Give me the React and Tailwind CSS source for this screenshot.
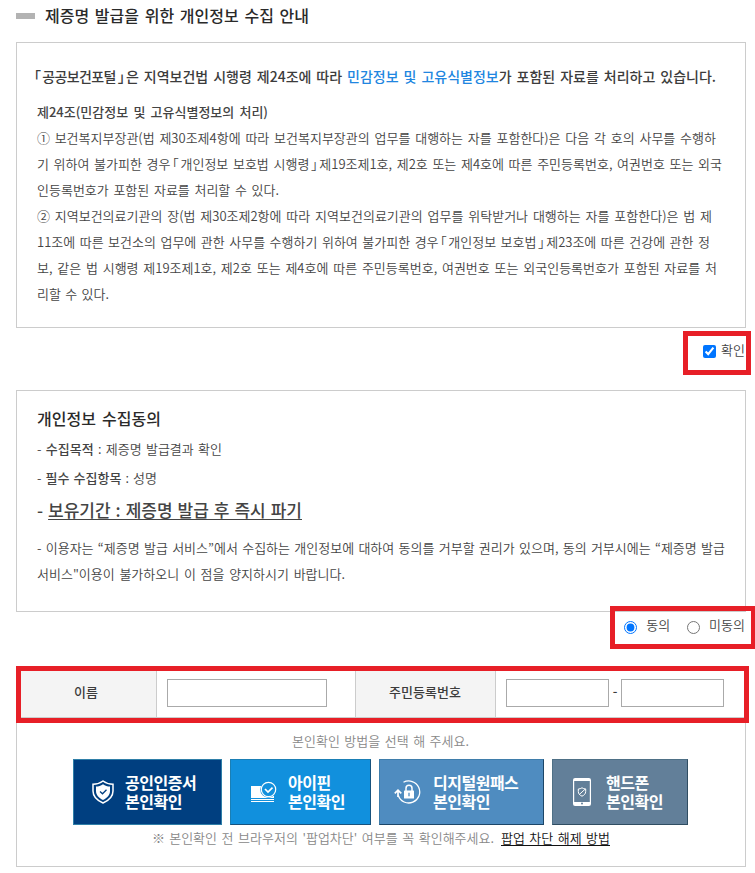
import { useState } from "react";
import clsx from "clsx";

const articles = [
  { mark: "①", text: " 보건복지부장관(법 제30조제4항에 따라 보건복지부장관의 업무를 대행하는 자를 포함한다)은 다음 각 호의 사무를 수행하", width: "w-[679px]" },
  { text: "기 위하여 불가피한 경우「개인정보 보호법 시행령」제19조제1호, 제2호 또는 제4호에 따른 주민등록번호, 여권번호 또는 외국", width: "w-[685px]" },
  { text: "인등록번호가 포함된 자료를 처리할 수 있다.", width: "w-[242px]" },
  { mark: "②", text: " 지역보건의료기관의 장(법 제30조제2항에 따라 지역보건의료기관의 업무를 위탁받거나 대행하는 자를 포함한다)은 법 제", width: "w-[675px]" },
  { text: "11조에 따른 보건소의 업무에 관한 사무를 수행하기 위하여 불가피한 경우「개인정보 보호법」제23조에 따른 건강에 관한 정", width: "w-[673px]" },
  { text: "보, 같은 법 시행령 제19조제1호, 제2호 또는 제4호에 따른 주민등록번호, 여권번호 또는 외국인등록번호가 포함된 자료를 처", width: "w-[680px]" },
  { text: "리할 수 있다.", width: "w-[72px]" },
];

const methods = [
  { name: "공인인증서", icon: ShieldIcon, box: "w-[149px] pl-[18px] gap-[11px] bg-[#003f80] border-[#2f7fa8]" },
  { name: "아이핀", icon: CardIcon, box: "w-[141px] pl-[20px] gap-[11px] bg-[#1190dd] border-t-[#1a7fb5] border-l-[#1a7fb5] border-r-[#17527d] border-b-[#17527d]" },
  { name: "디지털원패스", icon: LockIcon, box: "w-[165px] pl-[14px] gap-[12px] bg-[#4f8cc0] border-t-[#3f7dab] border-l-[#3f7dab] border-r-[#1c4668] border-b-[#1c4668]" },
  { name: "핸드폰", icon: PhoneIcon, box: "w-[136px] pl-[20px] gap-[15px] bg-[#627f99] border-t-[#4e7086] border-l-[#4e7086] border-r-[#304d62] border-b-[#304d62]" },
];

function Line({ className, children }) {
  return <p className={clsx("whitespace-nowrap [text-align-last:justify]", className)}>{children}</p>;
}

function ShieldIcon() {
  return (
    <svg width="22" height="24" viewBox="0 0 22 24" fill="none">
      <path d="M11 1C8 3.3 4.8 4.2 1 4.3V11c0 5.7 4.2 9.5 10 12 5.800-2.500 10-6.300 10-12V4.300C17.200 4.200 14 3.300 11 1Z" stroke="white" strokeWidth="1.500" />
      <path d="M11 4.200C8.800 5.700 6.600 6.400 4 6.600V11c0 4.100 2.800 7 7 9 4.200-2 7-4.900 7-9V6.600c-2.600-.2-4.800-.9-7-2.400Z" fill="white" />
      <path d="m8 11.500 2.500 2.300 4-4" stroke="#003f80" strokeWidth="1.300" />
    </svg>
  );
}

function CardIcon() {
  return (
    <svg width="26" height="22" viewBox="0 0 26 22" fill="none">
      <rect y="5" width="23" height="12" fill="white" />
      <rect y="18" width="23" height="1" fill="white" />
      <rect y="20" width="23" height="1" fill="white" />
      <circle cx="17.500" cy="8.500" r="8.300" fill="#1190dd" />
      <circle cx="17.500" cy="8.500" r="7.200" stroke="white" strokeWidth="1.200" />
      <path d="m14 8 3 3 4.500-4.300" stroke="white" strokeWidth="1.700" />
    </svg>
  );
}

function LockIcon() {
  return (
    <svg width="27" height="24" viewBox="0 0 27 24" fill="none">
      <path d="M9.500 2.300A11 11 0 1 1 4.300 15.500" stroke="white" strokeWidth="1.300" />
      <path d="M4 17v-6M.8 13.300 4 10.200l3.300 3.100" stroke="white" strokeWidth="1.700" />
      <rect x="10" y="10.500" width="10" height="8" rx=".5" fill="white" />
      <path d="M12 11V8.300a3 3 0 0 1 6 0V11" stroke="white" strokeWidth="1.500" />
      <path d="M15 12.800v3.500" stroke="#4f8cc0" strokeWidth="1.300" />
    </svg>
  );
}

function PhoneIcon() {
  return (
    <svg width="18" height="28" viewBox="0 0 18 28" fill="none">
      <rect x=".6" y=".6" width="16.800" height="26.800" rx="1.500" stroke="white" strokeWidth="1.200" />
      <path d="M1 1h16v2H1zM1 24h16v3H1z" fill="white" />
      <circle cx="9" cy="25.500" r="1" fill="#627f99" />
      <path d="M9 9.800c-1.200.8-2.300 1.100-3.700 1.200v2.500c0 2.300 1.500 3.700 3.700 4.700 2.200-1 3.700-2.400 3.700-4.700V11c-1.400-.1-2.500-.4-3.700-1.200ZM6.300 16.500l6-5.500" stroke="white" strokeWidth="1" />
    </svg>
  );
}

function Highlight({ className }) {
  return <div className={clsx("pointer-events-none absolute border-[5px] border-[#e71f27]", className)} />;
}

export default function App() {
  const [confirmed, setConfirmed] = useState(true);
  const [agree, setAgree] = useState("yes");

  return (
    <div className="h-[873px] w-[755px] overflow-hidden bg-white pl-4 font-['Noto_Sans_CJK_KR',sans-serif] text-[13px] font-[350] leading-[26px] text-[#444] [font-feature-settings:'halt']">
      <div className="flex h-[42px] items-start gap-[10px] pt-[2px]">
        <span className="mt-[11px] h-[6px] w-[19px] bg-[#b3b3b3]" />
        <h1 className="w-[264px] whitespace-nowrap text-[16px] font-medium text-[#2a2a2a] [text-align-last:justify]">제증명 발급을 위한 개인정보 수집 안내</h1>
      </div>

      <section className="h-[286px] w-[730px] border border-[#ccc] pl-[20px] pt-[20px]">
        <Line className="-ml-[3px] w-[682px] text-[14px] font-medium text-[#3c3c3c]">
          <span className="tracking-[-0.6px]">「공공보건포털」</span>은 지역보건법 시행령 제24조에 따라 <span className="text-[#2186e0]">민감정보 및 고유식별정보</span>가 포함된 자료를 처리하고 있습니다.
        </Line>
        <Line className="mt-[10px] w-[231px] font-medium">제24조(민감정보 및 고유식별정보의 처리)</Line>
        {articles.map((a) => (
          <Line key={a.text} className={a.width}>
            {a.mark && <span className="tracking-[-2px]">{a.mark}</span>}{a.text}
          </Line>
        ))}
      </section>

      <div className="relative flex h-[62px] w-[730px] justify-end pr-px pt-[9px]">
        <label className="flex gap-[5px]">
          <input type="checkbox" className="mt-[8px] size-[13px]" checked={confirmed} onChange={(e) => setConfirmed(e.target.checked)} />
          확인
        </label>
        <Highlight className="left-[667px] top-[3px] h-[44px] w-[68px]" />
      </div>

      <section className="h-[222px] w-[730px] border border-[#ccc] pl-[20px] pt-[14px]">
        <Line className="w-[124px] text-[16px] font-medium text-[#2a2a2a]">개인정보 수집동의</Line>
        <Line className="mt-[5px] w-[185px]">- <b className="font-medium">수집목적</b> : 제증명 발급결과 확인</Line>
        <Line className="mt-[3px] w-[120px]">- <b className="font-medium">필수 수집항목</b> : 성명</Line>
        <Line className="mt-[6px] w-[265px] text-[17px] font-medium">- <u className="underline-offset-2">보유기간 : 제증명 발급 후 즉시 파기</u></Line>
        <Line className="mt-[12px] w-[688px]">- 이용자는 “제증명 발급 서비스”에서 수집하는 개인정보에 대하여 동의를 거부할 권리가 있으며, 동의 거부시에는 “제증명 발급</Line>
        <Line className="w-[308px]">서비스"이용이 불가하오니 이 점을 양지하시기 바랍니다.</Line>
      </section>

      <div className="relative flex h-[59px] w-[730px] justify-end gap-[17px] pr-px">
        <label className="flex gap-[9px]">
          <input type="radio" name="agree" className="mt-[9px] size-[13px]" checked={agree === "yes"} onChange={() => setAgree("yes")} />
          동의
        </label>
        <label className="flex gap-[9px]">
          <input type="radio" name="agree" className="mt-[9px] size-[13px]" checked={agree === "no"} onChange={() => setAgree("no")} />
          미동의
        </label>
        <Highlight className="-top-[6px] left-[594px] h-[43px] w-[146px]" />
      </div>

      <section className="relative h-[196px] w-[730px] border border-t-0 border-[#ccc]">
        <div className="flex h-[47px] border-b border-[#ccc] font-medium text-[#3c3c3c]">
          <div className="flex w-[140px] items-center justify-center border-r border-[#ccc] bg-[#f4f4f4] pb-[5px] pr-px">이름</div>
          <div className="flex w-[199px] border-r border-[#ccc] pl-[10px] pt-[8px]">
            <input className="h-[28px] w-[160px] border border-[#aaa]" />
          </div>
          <div className="flex w-[140px] items-center justify-center border-r border-[#ccc] bg-[#f4f4f4] pb-[5px] pr-px">주민등록번호</div>
          <div className="flex pl-[10px] pt-[8px]">
            <input className="h-[28px] w-[103px] border border-[#aaa]" />
            <span className="w-[12px] text-center leading-[24px]">-</span>
            <input className="h-[28px] w-[103px] border border-[#aaa]" />
          </div>
        </div>
        <Highlight className="-left-px -top-[5px] h-[57px] w-[733px]" />

        <div className="flex flex-col pt-[10px] text-[#888]">
          <Line className="ml-[275px] w-[177px]">본인확인 방법을 선택 해 주세요.</Line>
          <div className="ml-[56px] mt-[5px] flex gap-[8px]">
            {methods.map(({ name, icon: Icon, box }) => (
              <button key={name} className={clsx("flex h-[66px] items-center border text-left text-[16px] font-bold leading-[19px] tracking-[-0.5px] text-white", box)}>
                <Icon />
                <span className="whitespace-nowrap">{name}<br />본인확인</span>
              </button>
            ))}
          </div>
          <div className="ml-[135px] flex gap-[7px]">
            <Line className="w-[342px]"><span className="tracking-[-2px]">※</span> 본인확인 전 브라우저의 '팝업차단' 여부를 꼭 확인해주세요.</Line>
            <a className="w-[109px] whitespace-nowrap text-[#111] underline underline-offset-2 [text-align-last:justify]">팝업 차단 해제 방법</a>
          </div>
        </div>
      </section>
    </div>
  );
}
